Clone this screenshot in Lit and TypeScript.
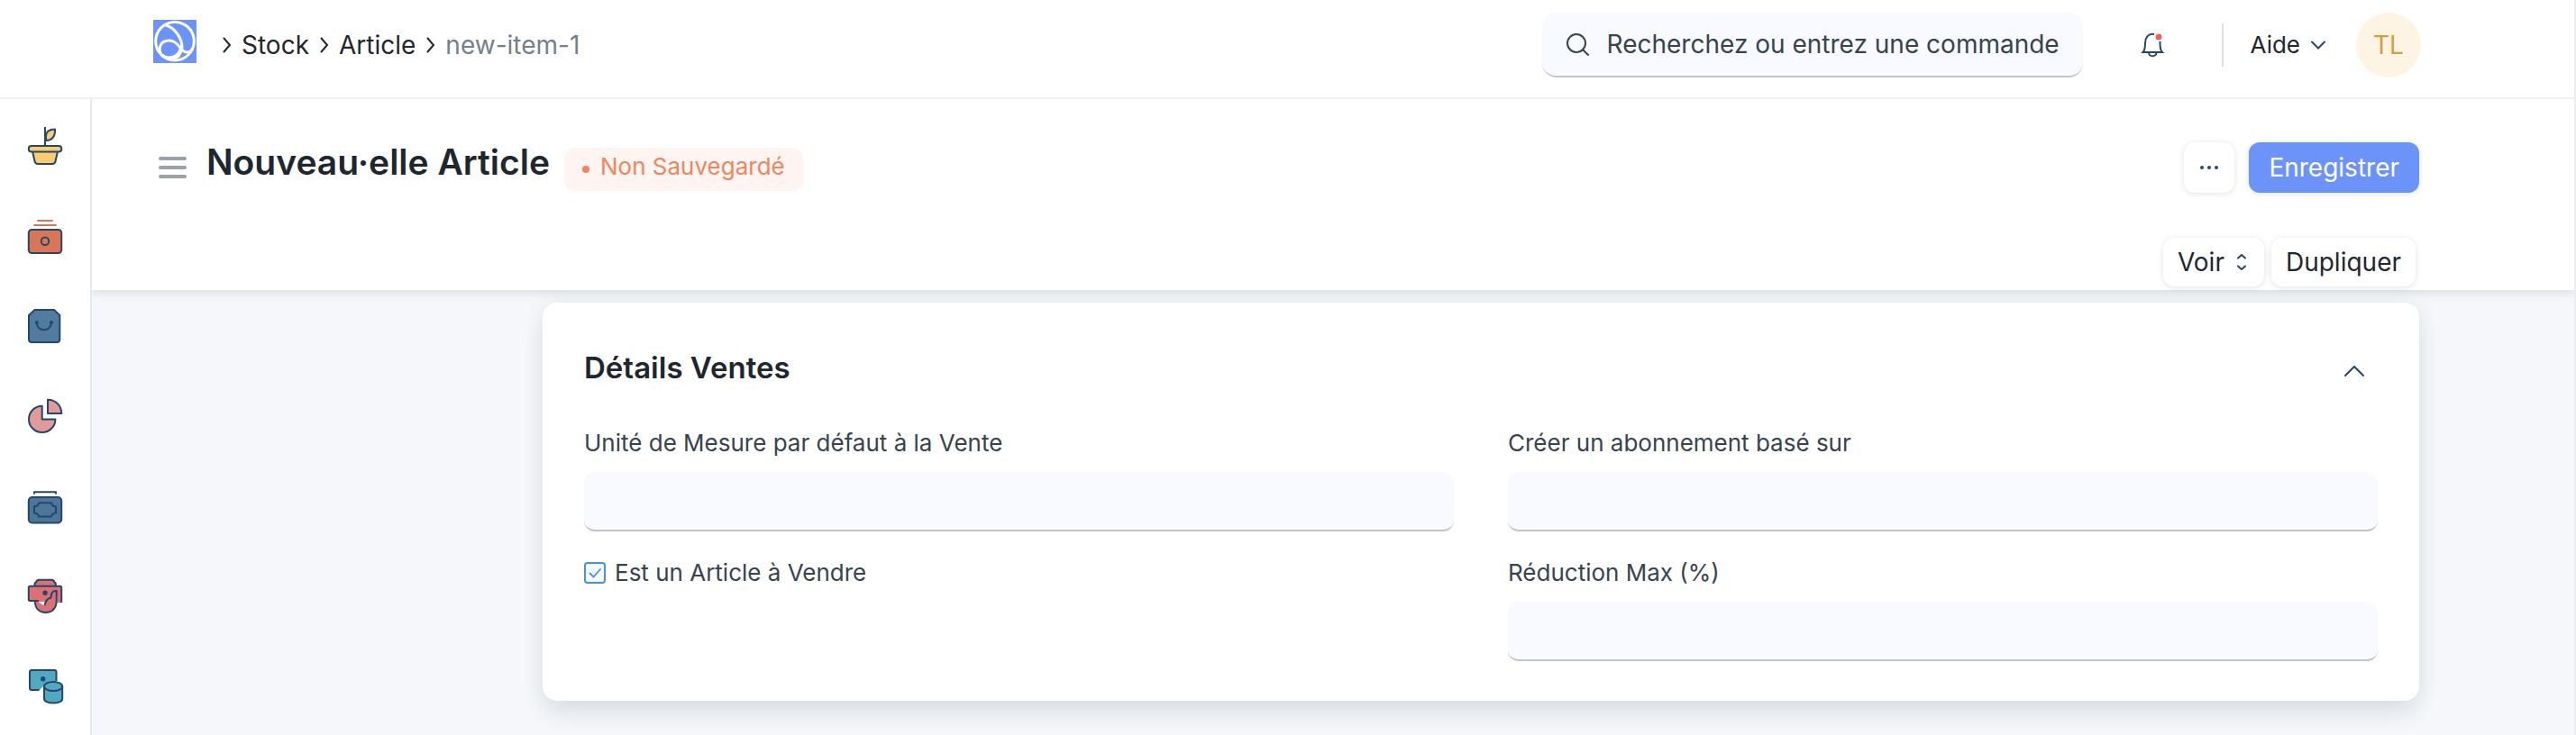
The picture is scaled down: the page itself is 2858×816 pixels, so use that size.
import { LitElement, html, css, svg } from "lit";
import { customElement, state } from "lit/decorators.js";

const NAVY = "#24476b";

const chevron = svg`<path d="M1.5 1.5 L8 9 L1.5 16.500" />`;

const modules = [
  {
    name: "Agriculture",
    art: svg`
      <path d="M20 -1 V19" />
      <path fill="#f8cd72" d="M21 14 V9 C21 4 25 1.500 31 1.500 C31.500 9 28 14 21 14 Z" />
      <path fill="#f8cd72" d="M6 26 L8.500 37 Q9.200 40 12 40 H28 Q30.800 40 31.500 37 L34 26" />
      <rect fill="#f8cd72" x="1.800" y="20" width="36.400" height="6.500" rx="3" />`,
  },
  {
    name: "Actifs",
    art: svg`
      <path stroke="#d97657" d="M11.300 3 H28.700 M7.300 8 H32.700" />
      <rect fill="#d97657" x="1.800" y="13" width="36.400" height="26" rx="3.500" />
      <circle cx="20" cy="25.700" r="4.200" />`,
  },
  {
    name: "Achats",
    art: svg`
      <path fill="#517ca0" d="M8.500 2 H30 L36.300 8 V34.500 Q36.300 38 33 38 H5.300 Q2 38 2 34.500 V8 Z" />
      <path d="M10.700 16 C11 27 26.500 27 27 16" />
      <circle fill="${NAVY}" cx="10.700" cy="16" r="1" /><circle fill="${NAVY}" cx="27" cy="16" r="1" />`,
  },
  {
    name: "CRM",
    art: svg`
      <path fill="#e19b9b" d="M16.700 8.700 A14.700 14.700 0 1 0 31.400 23.400 H16.700 Z" />
      <path fill="#e19b9b" d="M23 1.800 V17 H38.300 C38 8 32 2 23 1.800 Z" />`,
  },
  {
    name: "Comptabilité",
    art: svg`
      <path d="M8 6.500 V4.200 H32 V6.500" />
      <rect fill="#4d7699" x="1.800" y="10" width="36.400" height="28.500" rx="4" />
      <path d="M13 16.300 H27 Q27.500 20 32 20.300 V27.500 Q27.500 28 27 31.500 H13 Q12.500 28 8 27.500 V20.300 Q12.500 20 13 16.300 Z" />`,
  },
  {
    name: "Immersion",
    art: svg`
      <path fill="#dc7073" d="M8.500 9 V6 Q8.500 5 10 4.500 Q10.500 1.800 13.500 1.800 H27 Q30 1.800 30.500 4.500 Q31.800 5 31.800 6 V9" />
      <path fill="#dc7073" d="M8.700 25 C9 34 14 38 20.500 38 C28 38 33.300 33 33.300 25 V14 Q28 13 26.500 19 V22 Q20.500 23 19.500 31 L12.500 26 Z" stroke="none" />
      <path fill="#dc7073" stroke="none" d="M1.800 8.500 H38.300 V27 H34 L33 14 Q27 13 26.500 22 Q22 23 20.500 26 H1.800 Z" />
      <path d="M13 25 H3.500 Q1.800 25 1.800 23.500 V10.500 Q1.800 8.700 3.500 8.700 H36.500 Q38.200 8.700 38.200 10.500 V27" />
      <path d="M8.700 25 C9 34 14 38 20.500 38 C28 38 32.700 33 32.700 25 V14 Q26.500 13.500 26.500 21.500 Q20.500 23 19.500 30.500" />
      <circle fill="${NAVY}" cx="20" cy="16.300" r="1.700" />`,
  },
  {
    name: "Données",
    art: svg`
      <path fill="#51a9bf" stroke="none" d="M3 2 H32.500 V16 L19 19 L14 24 H3 Z" />
      <path d="M13.500 24 H5 Q3 24 3 22 V4 Q3 2 5 2 H30.500 Q32.500 2 32.500 4 V14" />
      <path fill="#51a9bf" d="M19 20 V34 C19 40 39.200 40 39.200 34 V20" />
      <ellipse fill="#51a9bf" cx="29.100" cy="20" rx="10.100" ry="5" />
      <circle fill="${NAVY}" cx="17.700" cy="11.700" r="1.700" />`,
  },
];

@customElement("app-root")
export class AppRoot extends LitElement {
  @state() private open = true;

  static styles = css`
    :host {
      display: flex;
      flex-direction: column;
      min-height: 100vh;
      box-sizing: border-box;
      border-right: 2px solid #ebedf0;
      background: #f5f7fa;
      color: #1f272e;
      font-family: Inter, "Noto Sans", sans-serif;
      font-size: 28px;
      line-height: 36px;
    }
    *, *::before { box-sizing: border-box; }
    svg { display: block; flex: none; fill: none; overflow: visible; }
    a { color: inherit; text-decoration: none; }
    button, input { font: inherit; color: inherit; margin: 0; }
    button { border: 0; padding: 0; background: none; cursor: pointer; }
    h1, h2, p, ol { margin: 0; padding: 0; }

    .topbar {
      display: flex;
      align-items: center;
      padding: 14px 170px 22px;
      background: #fff;
      border-bottom: 2px solid #edf2f7;
    }
    .logo { align-self: flex-start; padding-top: 8px; margin-right: 29px; }
    .crumbs { display: flex; list-style: none; flex: 1; }
    .crumbs li { display: flex; align-items: center; gap: 11px; margin-right: 12px; }
    .crumbs svg { stroke: #1f272e; stroke-width: 2; stroke-linecap: round; }
    .current { color: #74808b; }
    .search {
      display: flex;
      align-items: center;
      gap: 20px;
      width: 600px;
      height: 72px;
      padding: 0 16px 0 26px;
      border-radius: 16px;
      border-bottom: 2px solid #c0c6cc;
      background: #f9faff;
      color: #38434d;
    }
    .search input {
      appearance: none;
      flex: 1;
      min-width: 0;
      padding: 0;
      border: 0;
      outline: 0;
      background: transparent;
    }
    .search input::-webkit-search-cancel-button { display: none; }
    .search input::placeholder { color: #38434d; opacity: 1; }
    .bell { margin: 0 64px; }
    .help {
      display: flex;
      align-items: center;
      gap: 12px;
      height: 48px;
      padding: 0 34px 0 30px;
      border-left: 2px solid #dcdfe3;
      font-size: 26px;
    }
    .avatar {
      width: 72px;
      height: 72px;
      border-radius: 50%;
      background: #fdf4e4;
      color: #d3a03f;
    }

    .body { display: flex; flex: 1; }
    .sidebar {
      flex: none;
      width: 102px;
      padding-top: 2px;
      background: #fff;
      border-right: 2px solid #e6e9f0;
    }
    .sidebar a { display: flex; height: 100px; align-items: center; padding-left: 30px; }
    .sidebar svg { stroke: #24476b; stroke-width: 2; stroke-linejoin: round; }
    .page { flex: 1; min-width: 0; }
    .head {
      position: relative;
      padding: 48px 172px 4px 74px;
      background: #fff;
      box-shadow: 0 2px 10px rgba(25, 39, 52, 0.14);
      clip-path: inset(0 0 -24px 0);
    }
    .row { display: flex; align-items: center; height: 56px; }
    .menu { margin-right: 22px; }
    h1 { align-self: flex-start; font-size: 39px; line-height: 44px; font-weight: 600; }
    .pill {
      display: flex;
      align-items: center;
      align-self: flex-end;
      gap: 12px;
      height: 48px;
      margin: 0 auto 2px 16px;
      padding: 0 20px;
      border-radius: 12px;
      background: #fef5f2;
      color: #ef875b;
      font-size: 26px;
    }
    .pill::before { content: ""; width: 8px; height: 8px; border-radius: 50%; background: currentColor; }
    .pill span { padding-bottom: 6px; }
    .btn {
      display: flex;
      align-items: center;
      justify-content: center;
      border-radius: 12px;
      background: #fff;
      box-shadow: 0 1px 6px rgba(25, 39, 52, 0.14);
      white-space: nowrap;
    }
    .dots { width: 56px; height: 56px; margin-right: 16px; }
    .primary { height: 56px; padding: 0 22px; background: #6c94f8; color: #fff; }
    .actions { display: flex; justify-content: flex-end; gap: 8px; padding: 50px 4px 0 0; }
    .actions .btn { height: 54px; padding: 0 16px; gap: 14px; }
    .actions .view { padding-right: 20px; }

    .content { padding: 14px 172px 38px 500px; }
    .card {
      padding: 50px 46px 44px;
      border-radius: 16px;
      background: #fff;
      box-shadow: 0 18px 28px -4px rgba(25, 39, 52, 0.09), 0 0 26px rgba(25, 39, 52, 0.07);
    }
    .card header { display: flex; justify-content: space-between; align-items: center; }
    h2 { font-size: 33px; line-height: 44px; font-weight: 600; }
    .toggle { padding: 18px 15px 10px; }
    .form {
      display: grid;
      grid-template-columns: 1fr 1fr;
      gap: 30px 60px;
      padding-top: 46px;
      color: #38434d;
      font-size: 26px;
      line-height: 32px;
    }
    .form[hidden] { display: none; }
    .field { display: flex; flex-direction: column; gap: 16px; }
    .field input {
      width: 100%;
      height: 66px;
      padding: 0 20px;
      border: 0;
      border-bottom: 2px solid #c0c6cc;
      border-radius: 12px;
      outline: 0;
      background: #f9faff;
    }
    .check { display: flex; align-items: center; align-self: start; gap: 10px; }
    .check input {
      appearance: none;
      width: 24px;
      height: 24px;
      border: 2px solid #4a90e2;
      border-radius: 4px;
      background: #fff;
    }
    .check input:checked {
      background: #f3f9ff url("data:image/svg+xml,%3Csvg xmlns='http://www.w3.org/2000/svg' viewBox='0 0 20 20'%3E%3Cpath d='M4.500 10.500L8.500 14.500L16 6' fill='none' stroke='%234a90e2' stroke-width='1.800' stroke-linecap='round'/%3E%3C/svg%3E") center / 20px no-repeat;
    }
  `;

  private crumb(content: unknown) {
    return html`<li><svg width="10" height="18" viewBox="0 0 10 18">${chevron}</svg>${content}</li>`;
  }

  private field(id: string, label: string) {
    return html`<div class="field"><label for=${id}>${label}</label><input id=${id} type="text" /></div>`;
  }

  render() {
    return html`
      <header class="topbar">
        <a class="logo" href="#" aria-label="Accueil">
          <svg width="48" height="48" viewBox="0 0 48 48" stroke="#fff" stroke-width="3">
            <rect width="48" height="48" rx="1" fill="#6c94f8" stroke="none" />
            <circle cx="24" cy="23.700" r="21.300" />
            <path d="M13 5.500 C25 9 32 21 32 31 C31 38 27 42.500 21 44.500" />
            <path d="M11 41 C4 34 7 23.500 17 23 C27 22.500 29 33 35 35.500 C39 36.500 42 35.500 43.500 32.500" />
            <path d="M10 39 C14 43.500 24 43 28.500 36 Q30.500 33 31 29" />
          </svg>
        </a>
        <ol class="crumbs" aria-label="Fil d'Ariane">
          ${this.crumb(html`<a href="#">Stock</a>`)}
          ${this.crumb(html`<a href="#">Article</a>`)}
          ${this.crumb(html`<span class="current">new-item-1</span>`)}
        </ol>
        <label class="search">
          <svg width="26" height="26" viewBox="0 0 26 26" stroke="#38434d" stroke-width="2" stroke-linecap="round">
            <circle cx="12" cy="12" r="10" /><path d="M19.500 19.500 L25 25" />
          </svg>
          <input type="search" aria-label="Recherche" placeholder="Recherchez ou entrez une commande" />
        </label>
        <button class="bell" aria-label="Notifications">
          <svg width="26" height="28" viewBox="0 0 26 28" stroke="#24476b" stroke-width="2">
            <path d="M15 2 C8 1 5 6 5 12 C5 17 4.500 20 2.500 22 H24 C22 20 21.500 17 21.500 12 V10" />
            <path d="M9 22.500 C9.500 27.500 17 27.500 17.500 22.500" />
            <circle cx="20" cy="5" r="3.500" fill="#f1605d" stroke="none" />
          </svg>
        </button>
        <button class="help">
          Aide
          <svg width="16" height="10" viewBox="0 0 16 10" stroke="#24476b" stroke-width="2" stroke-linecap="round">
            <path d="M1 1.500 L8 8.500 L15 1.500" />
          </svg>
        </button>
        <button class="avatar">TL</button>
      </header>

      <div class="body">
        <nav class="sidebar" aria-label="Modules">
          ${modules.map(
            (m) => html`<a href="#" aria-label=${m.name}><svg width="40" height="40" viewBox="0 0 40 40">${m.art}</svg></a>`
          )}
        </nav>
        <main class="page">
          <div class="head">
            <div class="row">
              <button class="menu" aria-label="Menu">
                <svg width="31" height="24" viewBox="0 0 31 24" stroke="#9aa1ab" stroke-width="4" stroke-linecap="round">
                  <path d="M2 2 H29 M2 12 H29 M2 22 H29" />
                </svg>
              </button>
              <h1>Nouveau·elle Article</h1>
              <p class="pill"><span>Non Sauvegardé</span></p>
              <button class="btn dots" aria-label="Plus">
                <svg width="20" height="4" viewBox="0 0 20 4">
                  <g fill="#24476b">
                    <circle cx="2" cy="2" r="2" /><circle cx="10" cy="2" r="2" /><circle cx="18" cy="2" r="2" />
                  </g>
                </svg>
              </button>
              <button class="btn primary">Enregistrer</button>
            </div>
            <div class="actions">
              <button class="btn view">
                Voir
                <svg width="10" height="18" viewBox="0 0 10 18" stroke="#24476b" stroke-width="2" stroke-linecap="round" stroke-linejoin="round">
                  <path d="M1 4.500 L5 1 L9 4.500 M1 13.500 L5 17 L9 13.500" />
                </svg>
              </button>
              <button class="btn">Dupliquer</button>
            </div>
          </div>
          <div class="content">
            <section class="card">
              <header>
                <h2>Détails Ventes</h2>
                <button
                  class="toggle"
                  aria-label="Replier la section"
                  aria-expanded=${this.open}
                  @click=${() => (this.open = !this.open)}
                >
                  <svg width="22" height="12" viewBox="0 0 22 12" stroke="#24476b" stroke-width="2" stroke-linecap="round">
                    <path d="M1 11 L11 1 L21 11" />
                  </svg>
                </button>
              </header>
              <div class="form" ?hidden=${!this.open}>
                ${this.field("uom", "Unité de Mesure par défaut à la Vente")}
                ${this.field("subscription", "Créer un abonnement basé sur")}
                <label class="check"><input type="checkbox" checked />Est un Article à Vendre</label>
                ${this.field("discount", "Réduction Max (%)")}
              </div>
            </section>
          </div>
        </main>
      </div>
    `;
  }
}
